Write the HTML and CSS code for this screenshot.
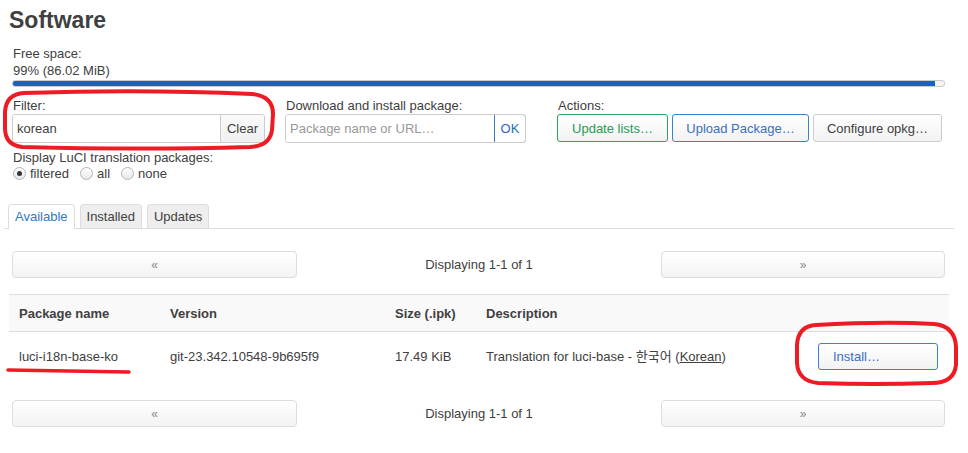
FILE: index.html
```html
<!DOCTYPE html>
<html lang="en">
<head>
    <meta charset="UTF-8">
    <meta name="viewport" content="width=device-width, initial-scale=1.0">
    <title>Software</title>
    <link rel="stylesheet" href="styles.css">
</head>
<body>
    <h2 class="title">Software</h2>

    <!-- free space -->
    <div class="free">
        <div>Free space:</div>
        <div>99% (86.02 MiB)</div>
    </div>
    <div class="progress"><div class="progress-fill" style="width: 99%"></div></div>

    <!-- filter / download / actions -->
    <div class="controls">
        <div class="group group-filter">
            <label>Filter:</label>
            <div class="input-group">
                <input type="text" value="korean">
                <button class="addon">Clear</button>
            </div>
        </div>
        <div class="group group-download">
            <label>Download and install package:</label>
            <div class="input-group">
                <input type="text" placeholder="Package name or URL…">
                <button class="addon addon-ok">OK</button>
            </div>
        </div>
        <div class="group group-actions">
            <label>Actions:</label>
            <div class="actions">
                <button class="btn btn-green">Update lists…</button>
                <button class="btn btn-blue">Upload Package…</button>
                <button class="btn btn-config">Configure opkg…</button>
            </div>
        </div>
    </div>

    <div class="luci">
        <div>Display LuCI translation packages:</div>
        <div class="radios">
            <label><span class="radio checked"></span>filtered</label>
            <label><span class="radio"></span>all</label>
            <label><span class="radio"></span>none</label>
        </div>
    </div>

    <!-- tabs -->
    <ul class="tabs">
        <li class="active">Available</li>
        <li>Installed</li>
        <li>Updates</li>
    </ul>

    <div class="pager">
        <button class="pager-btn">«</button>
        <div class="pager-text">Displaying 1-1 of 1</div>
        <button class="pager-btn">»</button>
    </div>

    <div class="table">
        <div class="tr th">
            <div class="td">Package name</div>
            <div class="td">Version</div>
            <div class="td">Size (.ipk)</div>
            <div class="td">Description</div>
            <div class="td"></div>
        </div>
        <div class="tr">
            <div class="td">luci-i18n-base-ko</div>
            <div class="td">git-23.342.10548-9b695f9</div>
            <div class="td">17.49 KiB</div>
            <div class="td">Translation for luci-base - 한국어 (<u>Korean</u>)</div>
            <div class="td"><button class="btn btn-blue btn-install">Install…</button></div>
        </div>
    </div>

    <div class="pager pager-bottom">
        <button class="pager-btn">«</button>
        <div class="pager-text">Displaying 1-1 of 1</div>
        <button class="pager-btn">»</button>
    </div>

    <!-- red marks drawn over the screenshot -->
    <svg class="mark mark-filter" width="275" height="61" viewBox="0 0 275 61">
        <path d="M22 3 Q140 -1 250 4 Q271 6 271 24 L270 40 Q268 56 248 57 Q140 60 20 57 Q3 55 3 38 L3 22 Q4 4 22 3 Z" />
    </svg>
    <svg class="mark mark-install" width="166" height="66" viewBox="0 0 166 66">
        <path d="M22 4 Q90 0 140 3 Q161 5 162 26 L162 44 Q160 62 138 62 Q80 64 24 62 Q4 60 3 42 L3 24 Q4 5 22 4 Z" />
    </svg>
    <svg class="mark mark-line" width="128" height="8" viewBox="0 0 128 8">
        <path d="M3 3 Q60 4 124 5" />
    </svg>
</body>
</html>
```

FILE: styles.css
```css
body {
    margin: 0;
    font-family: 'Liberation Sans', 'Noto Sans CJK KR', sans-serif;
    font-size: 13px;
    line-height: 17px;
    color: #404040;
    background-color: #fff;
    position: relative;
}
button, input {
    font-family: inherit;
    font-size: 13px;
}
.title {
    margin: 0;
    padding: 7px 0 0 9px;
    font-size: 23px;
    line-height: 27px;
    color: #404040;
}
.free {
    margin-top: 11px;
    padding-left: 13px;
}
.progress {
    margin: 1px 23px 0 12px;
    height: 5px;
    border: 1px solid #ccc;
    border-radius: 3px;
    background-color: #f5f5f5;
    overflow: hidden;
}
.progress-fill {
    height: 100%;
    background-color: #1565c0;
}
.controls {
    display: flex;
    margin-top: 11px;
}
.group label {
    display: block;
    line-height: 16px;
    padding-left: 1px;
}
.group-filter {
    margin-left: 12px;
    width: 253px;
}
.group-download {
    margin-left: 20px;
    width: 241px;
}
.group-actions {
    margin-left: 31px;
}
.input-group {
    display: flex;
    height: 29px;
    box-sizing: border-box;
    border: 1px solid #ccc;
    border-radius: 3px;
    overflow: hidden;
}
.input-group input {
    flex: 1;
    min-width: 0;
    border: none;
    padding: 0 4px;
    color: #404040;
    outline: none;
}
.input-group input::placeholder {
    color: #999;
}
.addon {
    border: none;
    border-left: 1px solid #ccc;
    background: linear-gradient(#fafafa, #f0f0f0);
    color: #404040;
    padding: 0 6px;
}
.addon-ok {
    width: 32px;
    padding: 0;
    color: #2a6ab8;
    background: #fff;
    border: 1px solid #3c7fc0;
    border-radius: 0 3px 3px 0;
    margin: -1px -1px -1px 0;
}
.actions {
    display: flex;
    gap: 4px;
}
.btn {
    height: 28px;
    padding: 0 8px;
    border: 1px solid #ccc;
    border-radius: 3px;
    background: linear-gradient(#fff, #f2f2f2);
    color: #404040;
    white-space: nowrap;
    cursor: pointer;
}
.btn-green {
    border-color: #2aa55c;
    color: #259a55;
    width: 111px;
}
.btn-blue {
    border-color: #3c7fd6;
    color: #3a6ec4;
    width: 137px;
}
.btn-config {
    width: 129px;
}
.luci {
    margin-top: 6px;
    padding-left: 13px;
}
.radios {
    display: flex;
    height: 15px;
    align-items: center;
    gap: 11px;
}
.radios label {
    display: flex;
    align-items: center;
    gap: 4px;
}
.radio {
    width: 11px;
    height: 11px;
    border: 1px solid #b5b5b5;
    border-radius: 50%;
    background: linear-gradient(#fff, #e8e8e8);
    position: relative;
}
.radio.checked::after {
    content: '';
    position: absolute;
    left: 3px;
    top: 3px;
    width: 5px;
    height: 5px;
    border-radius: 50%;
    background-color: #333;
}
.tabs {
    list-style: none;
    display: flex;
    gap: 5px;
    margin: 23px 14px 0 4px;
    padding: 0 0 0 4px;
    border-bottom: 1px solid #ddd;
}
.tabs li {
    padding: 3px 6px;
    border: 1px solid #ddd;
    border-bottom: none;
    border-radius: 4px 4px 0 0;
    background-color: #eee;
    height: 17px;
}
.tabs li.active {
    background-color: #fff;
    color: #2e79c7;
    margin-bottom: -1px;
    height: 18px;
}
.pager {
    display: grid;
    grid-template-columns: 285px 1fr 284px;
    align-items: center;
    margin: 22px 23px 0 12px;
}
.pager-bottom {
    margin-top: 19px;
}
.pager-btn {
    height: 27px;
    border: 1px solid #ddd;
    border-radius: 4px;
    background: linear-gradient(#fff, #f3f3f3);
    color: #888;
    font-size: 12px;
}
.pager-text {
    text-align: center;
}
.table {
    margin: 16px 19px 0 9px;
    border-top: 1px solid #ddd;
}
.tr {
    display: grid;
    grid-template-columns: 151px 225px 91px 332px 1fr;
    align-items: center;
    padding: 11px 0;
}
.th {
    font-weight: bold;
    background-color: #f9f9f9;
    border-bottom: 1px solid #ddd;
    padding: 10px 0 9px;
}
.td {
    padding: 0 10px;
    white-space: nowrap;
}
.td u {
    text-decoration-thickness: 1px;
}
.btn-install {
    width: 120px;
    height: 27px;
    padding: 0 14px;
    text-align: left;
}
.mark {
    position: absolute;
    overflow: visible;
}
.mark path {
    fill: none;
    stroke: #ed1c24;
    stroke-width: 4;
    stroke-linecap: round;
}
.mark-filter {
    left: 2px;
    top: 90px;
}
.mark-install {
    left: 794px;
    top: 321px;
}
.mark-line {
    left: 5px;
    top: 367px;
}
.mark-line path {
    stroke-width: 3.5;
}
```
